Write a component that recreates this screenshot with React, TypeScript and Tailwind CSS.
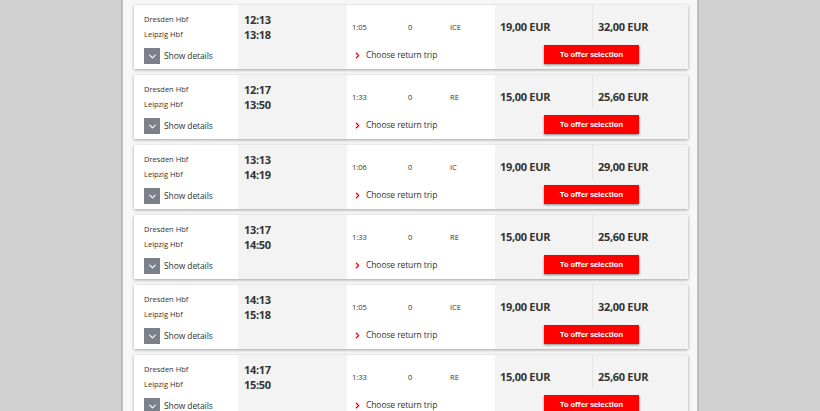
import { ChevronDown, ChevronRight } from "lucide-react";

type Connection = {
  dep: string;
  arr: string;
  duration: string;
  changes: number;
  product: string;
  saver: string;
  flex: string;
};

const CONNECTIONS: Connection[] = [
  { dep: "12:13", arr: "13:18", duration: "1:05", changes: 0, product: "ICE", saver: "19,00 EUR", flex: "32,00 EUR" },
  { dep: "12:17", arr: "13:50", duration: "1:33", changes: 0, product: "RE", saver: "15,00 EUR", flex: "25,60 EUR" },
  { dep: "13:13", arr: "14:19", duration: "1:06", changes: 0, product: "IC", saver: "19,00 EUR", flex: "29,00 EUR" },
  { dep: "13:17", arr: "14:50", duration: "1:33", changes: 0, product: "RE", saver: "15,00 EUR", flex: "25,60 EUR" },
  { dep: "14:13", arr: "15:18", duration: "1:05", changes: 0, product: "ICE", saver: "19,00 EUR", flex: "32,00 EUR" },
  { dep: "14:17", arr: "15:50", duration: "1:33", changes: 0, product: "RE", saver: "15,00 EUR", flex: "25,60 EUR" }
];

const ConnectionCard = ({ connection }: { connection: Connection }) => {
  return (
    <div className="grid h-[64px] grid-cols-[104px_109px_148px_1fr] bg-white text-[#333] shadow-[0_1px_3px_rgba(0,0,0,0.35)]">
      <div className="flex flex-col pl-[10px] pt-[9px]">
        <span className="text-[7.5px] leading-[10px]">Dresden Hbf</span>
        <span className="mt-[5px] text-[7.5px] leading-[10px]">Leipzig Hbf</span>
        <button type="button" className="mt-[9px] flex items-center gap-[4px]">
          <span className="flex h-[16px] w-[16px] items-center justify-center bg-[#7c8089]">
            <ChevronDown size={11} strokeWidth={2.5} className="text-white" />
          </span>
          <span className="text-[8.5px] tracking-[-0.1px] text-[#333]">Show details</span>
        </button>
      </div>

      <div className="flex flex-col bg-[#f3f3f3] pl-[6px] pt-[7px] font-bold">
        <span className="text-[11px] leading-[15px] tracking-[-0.3px]">{connection.dep}</span>
        <span className="text-[11px] leading-[15px] tracking-[-0.3px]">{connection.arr}</span>
      </div>

      <div className="flex flex-col pl-[5px] pt-[17px]">
        <div className="flex text-[7.5px] leading-[10px]">
          <span className="w-[56px]">{connection.duration}</span>
          <span className="w-[42px]">{connection.changes}</span>
          <span>{connection.product}</span>
        </div>
        <div className="ml-[1px] mt-[17px] flex items-center gap-[4px]">
          <ChevronRight size={9} strokeWidth={3.5} className="text-[#ec0016]" />
          <span className="text-[8.5px] leading-[12px] tracking-[-0.1px]">Choose return trip</span>
        </div>
      </div>

      <div className="flex flex-col items-center bg-[#f3f3f3]">
        <div className="flex w-full">
          <div className="h-[35px] w-[98px] border-r border-[#e6e6e6] pl-[5px] pt-[15px] text-[11px] font-bold leading-[14px] tracking-[-0.3px]">
            {connection.saver}
          </div>
          <div className="pl-[5px] pt-[15px] text-[11px] font-bold leading-[14px] tracking-[-0.3px]">{connection.flex}</div>
        </div>
        <button
          type="button"
          className="mt-[5px] h-[19px] w-[95px] bg-[#ff0000] text-[7.5px] font-bold tracking-[-0.1px] text-white shadow-[0_1px_2px_rgba(0,0,0,0.45)]"
        >
          To offer selection
        </button>
      </div>
    </div>
  );
};

export default function App() {
  return (
    <div className="h-[411px] overflow-hidden bg-[#d0d0d0] font-['Open_Sans',sans-serif]">
      <div className="mx-auto min-h-full w-[578px] border-x-2 border-[#bdbdbd] bg-[#f7f7f7] pl-[11px] pr-[9px] pt-[5px]">
        <div className="flex flex-col gap-[6px]">
          {CONNECTIONS.map((connection) => (
            <ConnectionCard key={connection.dep} connection={connection} />
          ))}
        </div>
      </div>
    </div>
  );
}
